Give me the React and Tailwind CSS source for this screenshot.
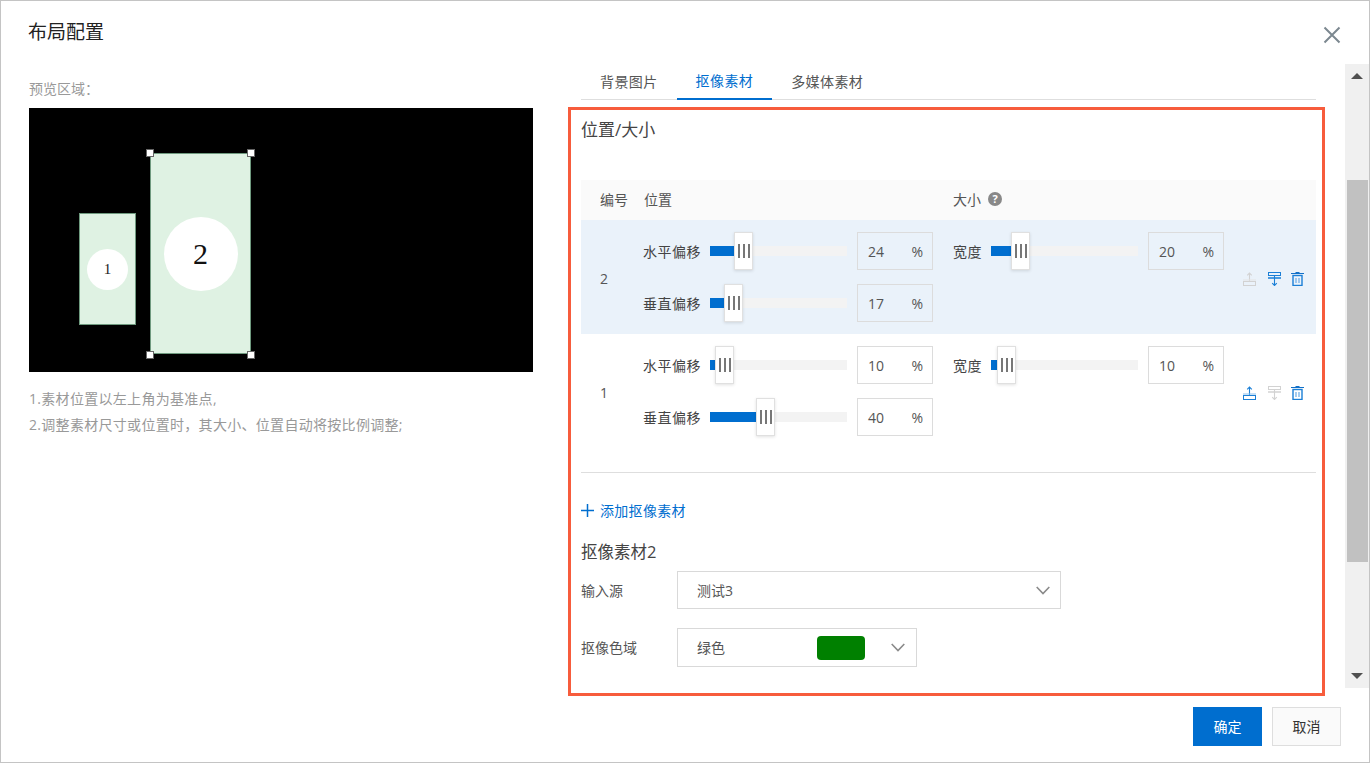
import { useState } from "react";

const font = "font-['Open_Sans','Noto_Sans_CJK_SC',sans-serif]";

function Slider({ fill, wide }) {
  return (
    <div className={"relative h-[10px] bg-[#f3f3f3] " + (wide ? "w-[147px]" : "w-[137px]")}>
      <div className="h-full bg-[#006ecf]" style={{ width: fill }} />
      <div
        className="absolute top-[-14px] w-[19px] h-[38px] bg-white border border-[#e0e0e0] shadow-[0_1px_3px_rgba(0,0,0,0.12)] flex items-center justify-center gap-[3px]"
        style={{ left: fill }}
      >
        <span className="w-[2px] h-[14px] bg-[#777]" />
        <span className="w-[2px] h-[14px] bg-[#777]" />
        <span className="w-[2px] h-[14px] bg-[#777]" />
      </div>
    </div>
  );
}

function Percent({ value }) {
  return (
    <div className="w-[76px] h-[38px] border border-[#dcdcdc] flex items-center justify-between pl-[10px] pr-[9px] text-[14px] text-[#555]">
      <span>{value}</span>
      <span>%</span>
    </div>
  );
}

function Field({ label, fill, value }) {
  return (
    <div className="flex items-center">
      <span className="w-[67px] text-[14px] tracking-[0.5px] text-[#444] whitespace-nowrap">{label}</span>
      <Slider fill={fill} />
      <div className="ml-[10px]">
        <Percent value={value} />
      </div>
    </div>
  );
}

function MoveTop({ on }) {
  const c = on ? "#1b7fd6" : "#d2d2d2";
  const soft = on ? "#8fc2ee" : "#e4e4e4";
  return (
    <svg width="13" height="14" viewBox="0 0 13 14" fill="none">
      <path d="M6.5 1v9M4.2 3.4 6.5 1l2.3 2.4" stroke={c} strokeWidth="1.1" />
      <path d="M0 8h13" stroke={soft} />
      <rect x="0.5" y="9.5" width="12" height="4" stroke={c} />
    </svg>
  );
}

function MoveBottom({ on }) {
  const c = on ? "#1b7fd6" : "#d2d2d2";
  const soft = on ? "#4a9be0" : "#dedede";
  return (
    <svg width="13" height="14" viewBox="0 0 13 14" fill="none">
      <rect x="0.5" y="0.5" width="12" height="3" stroke={c} />
      <path d="M0 6h13" stroke={soft} strokeWidth="2" />
      <path d="M6.5 4v9.5M4.2 11.2 6.5 13.5l2.3-2.3" stroke={c} strokeWidth="1.1" />
    </svg>
  );
}

function Trash() {
  return (
    <svg className="ml-[-2px]" width="13" height="14" viewBox="0 0 13 14" fill="none">
      <path d="M0 1.5h13" stroke="#1270c8" />
      <path d="M4.5 0.5h4" stroke="#1270c8" />
      <rect x="2" y="3.5" width="9" height="10" stroke="#1b7fd6" strokeWidth="1.4" />
      <path d="M5 6v5M8 6v5" stroke="#7db6e8" strokeWidth="1.4" />
    </svg>
  );
}

function Row({ no, x, y, w, up, down, selected }) {
  return (
    <div className={"h-[114px] flex items-center " + (selected ? "bg-[#eaf2fa]" : "bg-white")}>
      <span className="w-[62px] mt-[3px] pl-[19px] text-[14px] text-[#555]">{no}</span>
      <div className="w-[310px] flex flex-col gap-[14px]">
        <Field label="水平偏移" fill={x} value={selected ? 24 : 10} />
        <Field label="垂直偏移" fill={y} value={selected ? 17 : 40} />
      </div>
      <div className="self-start mt-[12px] flex items-center">
        <span className="w-[38px] text-[14px] tracking-[0.5px] text-[#444] whitespace-nowrap">宽度</span>
        <Slider fill={w} wide />
        <div className="ml-[10px]">
          <Percent value={selected ? 20 : 10} />
        </div>
      </div>
      <div className="ml-[19px] mt-[4px] flex items-center gap-[12px]">
        <MoveTop on={up} />
        <MoveBottom on={down} />
        <Trash />
      </div>
    </div>
  );
}

function Chevron() {
  return (
    <svg width="14" height="9" viewBox="0 0 14 9" fill="none">
      <path d="M0.7 1 7 7.5 13.3 1" stroke="#8a8a8a" strokeWidth="1.6" />
    </svg>
  );
}

export default function App() {
  const [tab] = useState("抠像素材");
  return (
    <div className={"relative w-[1370px] h-[763px] bg-white border border-[#c4c4c4] flex flex-col text-[#333] overflow-hidden " + font}>
      <div className="h-[63px] shrink-0 flex items-start justify-between pl-[27px] pr-[28px]">
        <h1 className="mt-[17px] text-[19px] leading-[28px] font-normal text-[#222]">布局配置</h1>
        <svg className="mt-[25px]" width="18" height="18" viewBox="0 0 18 18" fill="none">
          <path d="M1.5 1.5 16.5 16.5M16.5 1.5 1.5 16.5" stroke="#7c8890" strokeWidth="2" />
        </svg>
      </div>

      <div className="h-[624px] shrink-0 flex">
        <div className="w-[580px] shrink-0 pl-[28px] pt-[15px]">
          <div className="h-[20px] leading-[20px] text-[14px] text-[#999]">预览区域：</div>
          <div className="relative mt-[9px] w-[504px] h-[264px] bg-black">
            <div className="absolute left-[50px] top-[105px] w-[57px] h-[112px] bg-[#dff2e3] border border-[#6f9a7f] flex items-center justify-center">
              <div className="w-[41px] h-[41px] rounded-full bg-white flex items-center justify-center font-['Liberation_Serif',serif] text-[15px] text-[#222]">1</div>
            </div>
            <div className="absolute left-[121px] top-[45px] w-[101px] h-[201px] bg-[#dff2e3] border border-[#6f9a7f] flex items-center justify-center">
              <div className="w-[74px] h-[74px] rounded-full bg-white flex items-center justify-center font-['Liberation_Serif',serif] text-[30px] text-[#111]">2</div>
            </div>
            <span className="absolute left-[117px] top-[41px] w-[8px] h-[8px] bg-white border border-[#666]" />
            <span className="absolute left-[218px] top-[41px] w-[8px] h-[8px] bg-white border border-[#666]" />
            <span className="absolute left-[117px] top-[243px] w-[8px] h-[8px] bg-white border border-[#666]" />
            <span className="absolute left-[218px] top-[243px] w-[8px] h-[8px] bg-white border border-[#666]" />
          </div>
          <div className="mt-[14px] text-[14px] leading-[26px] tracking-[0.3px] text-[#999]">
            <div>1.素材位置以左上角为基准点,</div>
            <div>2.调整素材尺寸或位置时，其大小、位置自动将按比例调整;</div>
          </div>
        </div>

        <div className="w-[735px] shrink-0">
          <div className="h-[36px] border-b border-[#dedede] flex text-[14px]">
            {["背景图片", "抠像素材", "多媒体素材"].map((t) => (
              <div
                key={t}
                className={
                  "h-[36px] flex items-center justify-center px-[19px] pb-[2px] whitespace-nowrap tracking-[0.4px] " +
                  (t === tab ? "border-b-2 border-[#006ecf] text-[#006ecf]" : "text-[#555]")
                }
              >
                <span>{t}</span>
              </div>
            ))}
          </div>

          <div className="mt-[18px] h-[24px] leading-[24px] text-[17px] text-[#444]">位置/大小</div>

          <div className="mt-[38px] h-[40px] pb-[2px] bg-[#fafafa] flex items-center text-[14px] text-[#555]">
            <span className="w-[63px] pl-[19px]">编号</span>
            <span className="w-[309px]">位置</span>
            <span>大小</span>
            <span className="ml-[7px] w-[14px] h-[14px] rounded-full bg-[#888] text-white text-[11px] font-bold flex items-center justify-center">?</span>
          </div>
          <Row no={2} x={24} y={14} w={20} down selected />
          <Row no={1} x={5} y={46} w={6} up />

          <div className="mt-[24px] border-t border-[#dedede]" />

          <div className="mt-[27px] h-[20px] flex items-center text-[13px] text-[#006ecf]">
            <svg width="13" height="13" viewBox="0 0 13 13" fill="none">
              <path d="M6.5 0v13M0 6.5h13" stroke="#006ecf" strokeWidth="1.5" />
            </svg>
            <span className="ml-[6px] text-[14px] tracking-[0.3px]">添加抠像素材</span>
          </div>

          <div className="mt-[20px] h-[24px] leading-[24px] text-[16.5px] text-[#444]">抠像素材2</div>

          <div className="mt-[7px] flex items-center">
            <span className="w-[96px] text-[14px] text-[#555]">输入源</span>
            <div className="w-[384px] h-[38px] border border-[#d9d9d9] flex items-center justify-between pl-[19px] pr-[10px] text-[14px] text-[#555]">
              <span>测试3</span>
              <Chevron />
            </div>
          </div>

          <div className="mt-[19px] flex items-center">
            <span className="w-[96px] text-[14px] text-[#555]">抠像色域</span>
            <div className="w-[240px] h-[39px] border border-[#d9d9d9] flex items-center pl-[19px] pr-[11px] text-[14px] text-[#555]">
              <span className="w-[120px]">绿色</span>
              <span className="w-[48px] h-[24px] rounded-[4px] bg-[#008000]" />
              <span className="ml-auto flex">
                <Chevron />
              </span>
            </div>
          </div>
        </div>

        <div className="ml-auto w-[24px] shrink-0 bg-[#f0f0f0] flex flex-col items-center">
          <div className="h-[24px] flex items-center justify-center">
            <span className="w-0 h-0 border-x-[6px] border-x-transparent border-b-[6px] border-b-[#505050]" />
          </div>
          <div className="mt-[92px] w-[21px] h-[382px] bg-[#c1c1c1]" />
          <div className="mt-auto h-[24px] flex items-center justify-center">
            <span className="w-0 h-0 border-x-[6px] border-x-transparent border-t-[6px] border-t-[#505050]" />
          </div>
        </div>
      </div>

      <div className="flex-1 flex justify-end items-start gap-[10px] pt-[19px] pr-[28px] text-[14px]">
        <button className="w-[69px] h-[39px] bg-[#006ecf] text-white">确定</button>
        <button className="w-[69px] h-[39px] bg-[#fafafa] border border-[#dedede] text-[#333]">取消</button>
      </div>

      <div className="absolute left-[567px] top-[106px] w-[757px] h-[589px] border-[3px] border-[#f75c3c] pointer-events-none" />
    </div>
  );
}
